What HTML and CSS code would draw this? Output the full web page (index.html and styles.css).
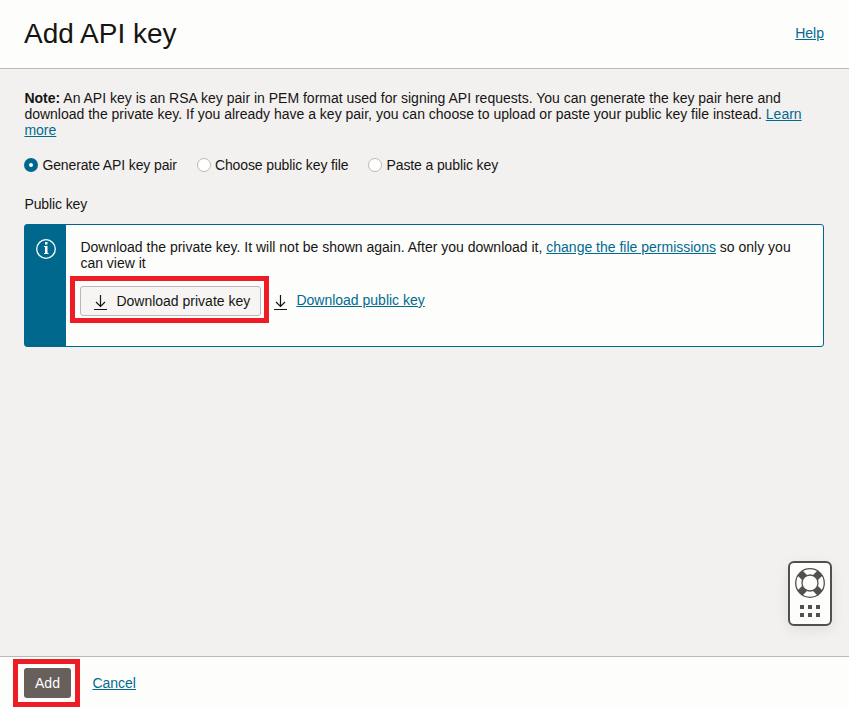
FILE: index.html
```html
<!DOCTYPE html>
<html lang="en">
<head>
<meta charset="utf-8">
<title>Add API key</title>
<link rel="stylesheet" href="styles.css">
</head>
<body>
<div class="panel">
  <header class="header">
    <h1>Add API key</h1>
    <a class="link" href="#">Help</a>
  </header>
  <main class="content">
    <p class="note"><strong>Note:</strong> An API key is an RSA key pair in PEM format used for signing API requests. You can generate the key pair here and download the private key. If you already have a key pair, you can choose to upload or paste your public key file instead. <a class="link" href="#">Learn more</a></p>
    <div class="options">
      <label class="option"><input type="radio" name="source" checked>Generate API key pair</label>
      <label class="option"><input type="radio" name="source">Choose public key file</label>
      <label class="option"><input type="radio" name="source">Paste a public key</label>
    </div>
    <div class="label">Public key</div>
    <section class="info">
      <div class="info-side">
        <svg width="22" height="22" viewBox="0 0 22 22"><circle cx="11" cy="11" r="9.3" fill="none" stroke="#fff" stroke-width="1.3"/><path d="M10 4h2.500v2.500H10zM9 8h3.500v7h1v1H9v-1h1V9H9z" fill="#fff"/></svg>
      </div>
      <div class="info-body">
        <p>Download the private key. It will not be shown again. After you download it, <a class="link" href="#">change the file permissions</a> so only you can view it</p>
        <div class="downloads">
          <button class="button marked mark-download"><svg width="13" height="16" viewBox="0 0 13 16"><path d="M6.500 1v11.500M2 8l4.500 4.400L11 8M0 15.500h13" fill="none" stroke="#161513" stroke-width="1.200"/></svg><span>Download private key</span></button>
          <a class="public" href="#"><svg width="13" height="16" viewBox="0 0 13 16"><path d="M6.500 1v11.500M2 8l4.500 4.400L11 8M0 15.500h13" fill="none" stroke="#161513" stroke-width="1.200"/></svg><span class="link">Download public key</span></a>
        </div>
      </div>
    </section>
  </main>
  <footer class="footer">
    <button class="add marked mark-add">Add</button>
    <a class="link" href="#">Cancel</a>
  </footer>
</div>
<div class="support">
  <svg width="30" height="50" viewBox="0 0 30 50">
    <path d="M5 5l20 20M25 5L5 25" fill="none" stroke="#534f4c" stroke-width="7"/>
    <circle cx="15" cy="15" r="14.300" fill="none" stroke="#534f4c" stroke-width="1.300"/>
    <circle cx="15" cy="15" r="8" fill="#fdfdfc" stroke="#534f4c" stroke-width="1.300"/>
    <path d="M5 37h4v4H5zM13 37h4v4h-4zM21 37h4v4h-4zM5 45h4v4H5zM13 45h4v4h-4zM21 45h4v4h-4z" fill="#534f4c"/>
  </svg>
</div>
</body>
</html>
```
FILE: styles.css
```css
* { box-sizing: border-box; }
body {
  margin: 0;
  font: 14px/16px "Liberation Sans", Arial, sans-serif;
  color: #161513;
}
.panel {
  height: 707px;
  display: flex;
  flex-direction: column;
  background: #f3f1f0;
}
.header {
  height: 69px;
  flex: none;
  display: flex;
  align-items: center;
  justify-content: space-between;
  padding: 0 25px 2px 24px;
  background: #fdfdfc;
  border-bottom: 1px solid #bdb8b3;
}
h1 { margin: 1px 0 0; font-size: 28px; line-height: 32px; font-weight: 400; }
.link { color: #006b8f; text-decoration: underline; }
.content { flex: 1; padding: 21px 25px 0 24px; }
p { margin: 0; }
.note { padding-left: 0.4px; }
.options { display: flex; gap: 19.7px; margin-top: 19px; letter-spacing: -0.12px; }
.option { display: flex; align-items: center; gap: 4.4px; }
input {
  appearance: none;
  width: 14px;
  height: 14px;
  margin: 0;
  border: 1px solid #bdb8b3;
  border-radius: 50%;
  background: #fff;
}
input:checked { border: 5px solid #00688c; }
.label { margin-top: 23px; padding-left: 0.4px; letter-spacing: -0.1px; }
.info {
  display: flex;
  height: 123px;
  margin-top: 12px;
  border: 1px solid #00688c;
  border-radius: 3px;
  background: #fdfdfc;
}
.info-side { width: 41px; flex: none; padding: 13px 0 0 10px; background: #00688c; }
.info-body { flex: 1; padding: 14px 20px 0 14px; }
.info-body p { padding-left: 0.4px; }
.downloads { display: flex; gap: 13px; margin-top: 15px; }
button { font: inherit; letter-spacing: inherit; margin: 0; }
svg { display: block; flex: none; }
.button {
  width: 181px;
  height: 30px;
  display: flex;
  align-items: center;
  gap: 9.4px;
  padding: 0 0 0 13px;
  border: 1px solid #bdb8b3;
  border-radius: 3px;
  background: #f7f5f4;
  color: #161513;
}
.button svg { margin-top: 2px; }
.public { display: flex; gap: 9.4px; padding-top: 6px; text-decoration: none; }
.public svg { margin-top: 2px; }
.marked { position: relative; }
.marked::after { content: ""; position: absolute; border: 5px solid #ee1c25; pointer-events: none; }
.mark-download::after { inset: -11px -9px -8px -11px; }
.mark-add::after { inset: -9px; left: -11px; }
.footer {
  height: 51px;
  flex: none;
  display: flex;
  align-items: flex-start;
  gap: 21.4px;
  padding: 11px 24px 0;
  border-top: 1px solid #bdb8b3;
  background: #fdfdfc;
}
.footer .link { margin-top: 7px; }
.add { width: 47px; height: 30px; padding: 0; border: 0; border-radius: 3px; background: #665f5b; color: #fff; }
.support {
  position: absolute;
  left: 788px;
  top: 561px;
  width: 44px;
  height: 65px;
  padding: 5px;
  border: 2px solid #534f4c;
  border-radius: 6px;
  background: #fdfdfc;
  box-shadow: 0 4px 14px rgba(0, 0, 0, .08);
}
```
